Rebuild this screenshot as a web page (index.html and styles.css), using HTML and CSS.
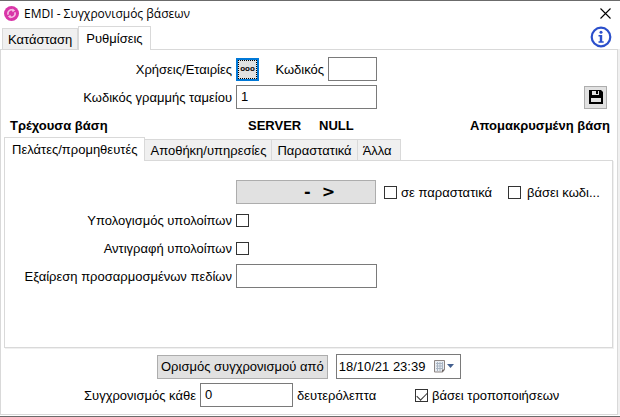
FILE: index.html
```html
<!DOCTYPE html>
<html lang="el">
<head>
  <meta charset="UTF-8">
  <meta name="viewport" content="width=device-width, initial-scale=1.0">
  <title>EMDI - Συγχρονισμός βάσεων</title>
  <link rel="stylesheet" href="styles.css">
</head>
<body>
  <div class="window">
    <header class="titlebar">
      <svg class="logo" width="15" height="15" viewBox="0 0 14 14">
        <circle cx="7" cy="7" r="7" fill="#d935a8"/>
        <path d="M3.9 8.2A3.3 3.3 0 0 1 8.6 4.1M10.1 5.8A3.3 3.3 0 0 1 5.4 9.9" fill="none" stroke="#f6c3e5" stroke-width="1.4"/>
        <path d="M7.8 2.4l2.6 1.8-2.5 1.7zM6.2 11.6L3.6 9.8l2.5-1.7z" fill="#f6c3e5"/>
      </svg>
      <h1>EMDI - Συγχρονισμός βάσεων</h1>
      <button class="close" aria-label="Close">
        <svg width="11" height="11" viewBox="0 0 11 11">
          <path d="M.5 .5l10 10M10.5 .5l-10 10" stroke="#000" stroke-width="1.1"/>
        </svg>
      </button>
    </header>

    <div class="top">
      <nav class="tabs">
        <button class="tab">Κατάσταση</button>
        <button class="tab active">Ρυθμίσεις</button>
      </nav>
      <button class="info" aria-label="Info">
        <svg width="22" height="22" viewBox="0 0 22 22">
          <circle cx="11" cy="11" r="9.3" fill="#fff" stroke="#2b4fcb" stroke-width="2.2"/>
          <circle cx="11" cy="6.2" r="1.5" fill="#2b4fcb"/>
          <path d="M8.5 9h3.7v6.3h1.5v1.4H8.5v-1.4h1.3v-4.9H8.5z" fill="#2b4fcb"/>
        </svg>
      </button>
    </div>

    <main class="panel">
      <div class="row">
        <label class="label" for="usage">Χρήσεις/Εταιρίες</label>
        <div class="field company">
          <button class="dots" id="usage"><span>ooo</span></button>
          <label for="code">Κωδικός</label>
          <input type="text" id="code" class="box">
        </div>
      </div>
      <div class="row">
        <label class="label" for="line">Κωδικός γραμμής ταμείου</label>
        <input type="text" id="line" class="box wide" value="1">
        <button class="save" aria-label="Save">
          <svg width="14" height="14" viewBox="0 0 14 14">
            <path d="M0 0h12l2 2v12H0z" fill="#000"/>
            <path d="M3 1h7v4H3zM2 8h10v4H2z" fill="#e1e1e1"/>
            <path d="M7 1h2v3H7z" fill="#000"/>
          </svg>
        </button>
      </div>

      <div class="bases">
        <span class="local">Τρέχουσα βάση</span>
        <span class="server">SERVER</span>
        <span>NULL</span>
        <span class="remote">Απομακρυσμένη βάση</span>
      </div>

      <nav class="tabs inner-tabs">
        <button class="tab active">Πελάτες/προμηθευτές</button>
        <button class="tab">Αποθήκη/υπηρεσίες</button>
        <button class="tab">Παραστατικά</button>
        <button class="tab">Άλλα</button>
      </nav>
      <section class="inner">
        <div class="row">
          <span class="label"></span>
          <button class="button arrow">-&nbsp; &gt;</button>
          <label class="check"><input type="checkbox"><span>σε παραστατικά</span></label>
          <label class="check code-check"><input type="checkbox"><span>βάσει κωδι...</span></label>
        </div>
        <div class="row">
          <label class="label" for="calc">Υπολογισμός υπολοίπων</label>
          <input type="checkbox" id="calc">
        </div>
        <div class="row">
          <label class="label" for="copy">Αντιγραφή υπολοίπων</label>
          <input type="checkbox" id="copy">
        </div>
        <div class="row">
          <label class="label" for="except">Εξαίρεση προσαρμοσμένων πεδίων</label>
          <input type="text" id="except" class="box wide">
        </div>
      </section>

      <footer class="sync">
        <div class="sync-row from">
          <button class="button">Ορισμός συγχρονισμού από</button>
          <div class="date">
            <input type="text" value="18/10/21 23:39" aria-label="Ορισμός συγχρονισμού από">
            <button class="calendar" aria-label="Calendar">
              <svg width="20" height="13" viewBox="0 0 20 13">
                <path d="M.5 .5h10v9l-2 2.500h-8z" fill="#e9edf2" stroke="#8d8583"/>
                <path d="M2 3.500h7M2 6h7M2 8.500h7M3.500 2v9M6 2v9M8.500 2v7" stroke="#a9b4c2"/>
                <path d="M8 12.500V9.500h3z" fill="#6d6563"/>
                <path d="M13 4h7l-3.500 4z" fill="#435f8f"/>
              </svg>
            </button>
          </div>
        </div>
        <div class="sync-row">
          <label class="label" for="every">Συγχρονισμός κάθε</label>
          <input type="text" id="every" class="box seconds" value="0">
          <span class="unit">δευτερόλεπτα</span>
          <label class="check"><input type="checkbox" checked><span>βάσει τροποποιήσεων</span></label>
        </div>
      </footer>
    </main>
  </div>
</body>
</html>
```

FILE: styles.css
```css
* {
  margin: 0;
  padding: 0;
  box-sizing: border-box;
}

body {
  font-family: "Liberation Sans", Arial, sans-serif;
  font-size: 13px;
  line-height: 16px;
  color: #000;
  background: #fff;
}

button, input {
  font: inherit;
  color: inherit;
}

button {
  border: none;
  background: none;
  white-space: nowrap;
}

svg {
  display: block;
}

.window {
  display: flex;
  flex-direction: column;
  min-height: 100vh;
  border-top: 1px solid #6b6b6b;
  border-bottom: 1px solid #6b6b6b;
}

.titlebar {
  display: flex;
  align-items: center;
  gap: 5px;
  height: 25px;
  padding: 0 9px 0 4px;
}

.titlebar h1 {
  flex: 1;
  font-family: "Open Sans", "Noto Sans", sans-serif;
  font-size: 12px;
  font-weight: normal;
}

.top {
  display: flex;
  justify-content: space-between;
  align-items: flex-end;
  height: 23px;
  padding: 0 8px 0 2px;
}

.info {
  align-self: flex-start;
}

/* tabs */
.tabs {
  display: flex;
  align-items: flex-end;
}

.tab {
  height: 21px;
  padding: 2px 5px 0;
  border: 1px solid #d9d9d9;
  border-bottom: none;
  border-left: none;
  background: #f0f0f0;
}

.tab:first-child {
  border-left: 1px solid #d9d9d9;
}

.tab.active {
  position: relative;
  height: 24px;
  margin-bottom: -1px;
  padding: 0 7px;
  border-left: 1px solid #d9d9d9;
  background: #fff;
}

.inner-tabs .tab:last-child {
  padding-right: 8px;
}

.panel {
  display: flex;
  flex: 1;
  flex-direction: column;
  margin: 0 2px 1px 0;
  padding: 7px 3px 0;
  border: 1px solid #d9d9d9;
  box-shadow: 2px 0 0 #f0f0f0;
}

/* form rows */
.row {
  display: flex;
  align-items: center;
  min-height: 24px;
  margin-bottom: 4px;
}

.label {
  flex: none;
  width: 228px;
  margin-right: 4px;
  padding-top: 2px;
  text-align: right;
}

.box {
  height: 24px;
  padding: 0 4px 1px;
  border: 1px solid #7a7a7a;
  background: #fff;
}

.wide {
  width: 141px;
}

.field {
  display: flex;
  align-items: center;
  width: 141px;
}

.company .box {
  width: 49px;
  margin-left: 4px;
}

.company label {
  margin-left: auto;
  padding-top: 2px;
}

.dots {
  width: 23px;
  height: 23px;
  border: 2px solid #0078d7;
  background: #e1e1e1;
  font-size: 8px;
  font-weight: bold;
}

.dots span {
  display: flex;
  justify-content: center;
  height: 19px;
  border: 1px dotted #000;
}

.save {
  display: flex;
  align-items: center;
  justify-content: center;
  width: 23px;
  height: 23px;
  margin: 0 7px 0 auto;
  border: 1px solid #adadad;
  background: #e1e1e1;
}

.bases {
  display: flex;
  padding: 5px 4px 3px 6px;
  font-weight: bold;
}

.local {
  width: 238px;
}

.server {
  width: 71px;
}

.remote {
  margin-left: auto;
}

.inner {
  flex: 1;
  padding: 19px 0 0;
  margin-right: 1px;
  border: 1px solid #d9d9d9;
  box-shadow: 1px 1px 0 #f0f0f0;
}

.inner .label {
  width: 227px;
}

.button {
  height: 24px;
  padding: 0 3px;
  border: 1px solid #adadad;
  background: #e1e1e1;
}

.arrow {
  width: 140px;
  padding-left: 30px;
  font-family: "DejaVu Sans", sans-serif;
  font-size: 16px;
  font-weight: bold;
}

/* check boxes */
input[type="checkbox"] {
  flex: none;
  width: 13px;
  height: 13px;
  border: 1px solid #333;
  background: #fff;
  appearance: none;
}

input[type="checkbox"]:checked::before {
  content: "";
  display: block;
  width: 9px;
  height: 5px;
  margin: 2px 1px;
  border-left: 1px solid #333;
  border-bottom: 1px solid #333;
  transform: rotate(-45deg);
}

.check {
  display: flex;
  align-items: center;
  gap: 4px;
  margin-left: 8px;
  white-space: nowrap;
}

.check span {
  padding-top: 2px;
}

.code-check {
  gap: 6px;
  margin-left: 16px;
}

.sync {
  padding: 6px 0 7px;
}

.sync-row {
  display: flex;
  align-items: center;
}

.sync-row .label {
  width: 192px;
}

.from {
  gap: 8px;
  margin-bottom: 4px;
  padding-left: 153px;
}

.date {
  display: flex;
  align-items: center;
  width: 125px;
  height: 25px;
  padding: 0 6px 0 2px;
  border: 1px solid #7a7a7a;
}

.date input {
  flex: 1;
  min-width: 0;
  border: none;
}

.seconds {
  width: 93px;
  margin-right: 4px;
}

.unit {
  width: 110px;
  padding-top: 2px;
}
```
